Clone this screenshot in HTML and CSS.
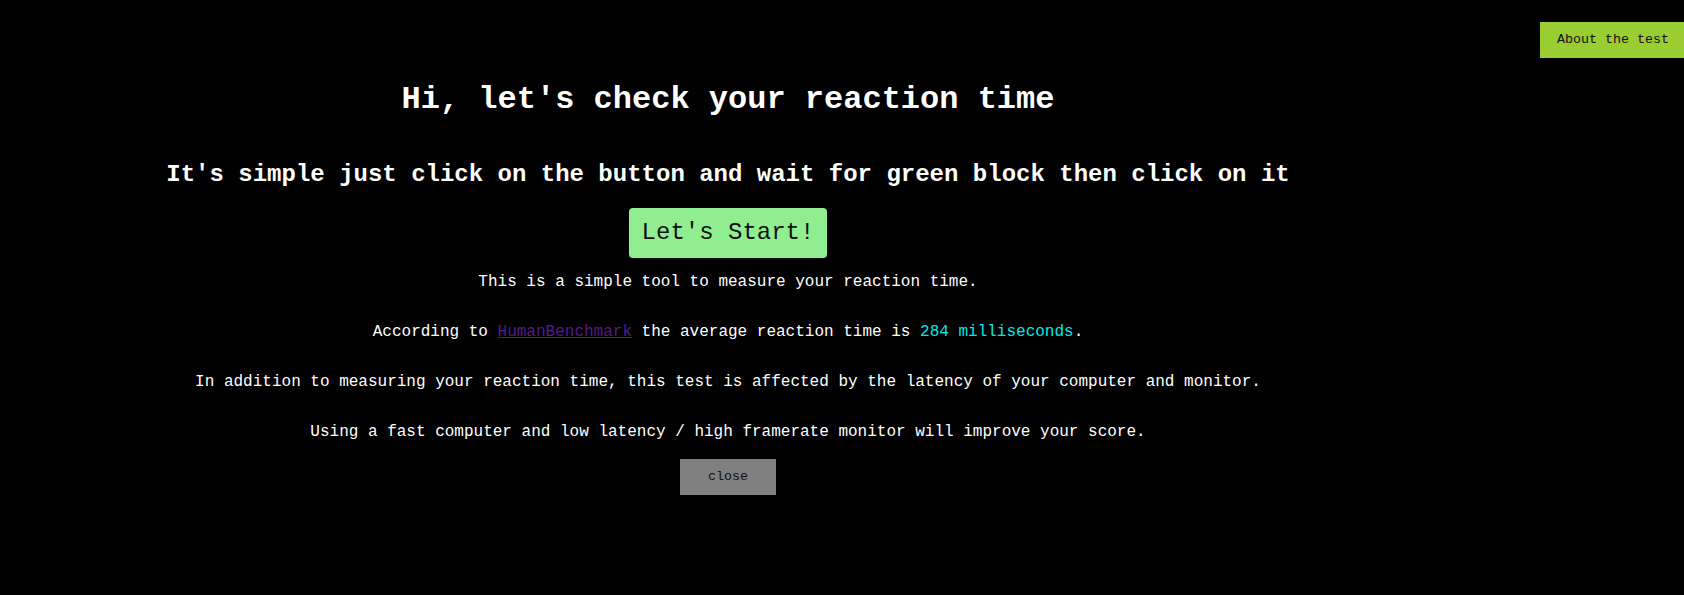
FILE: index.html
```html
<!DOCTYPE html>
<html lang="en">
<head>
<meta charset="utf-8">
<title>Reaction Time Test</title>
<link rel="stylesheet" href="styles.css">
</head>
<body>
<div class="page">
  <main class="main">
    <h1 class="title">Hi, let's check your reaction time</h1>
    <h2 class="subtitle">It's simple just click on the button and wait for green block then click on it</h2>
    <button class="start-btn" type="button">Let's Start!</button>
    <section class="about">
      <p class="about-line">This is a simple tool to measure your reaction time.</p>
      <p class="about-line">According to <a class="link" href="#">HumanBenchmark</a> the average reaction time is <span class="highlight">284 milliseconds</span>.</p>
      <p class="about-line">In addition to measuring your reaction time, this test is affected by the latency of your computer and monitor.</p>
      <p class="about-line">Using a fast computer and low latency / high framerate monitor will improve your score.</p>
    </section>
    <button class="close-btn" type="button">close</button>
  </main>
  <button class="about-btn" type="button">About the test</button>
</div>
</body>
</html>
```

FILE: styles.css
```css
html, body {
  margin: 0;
  padding: 0;
  background: #000;
  color: #fff;
  font-family: "Liberation Mono", "Courier New", monospace;
}

.page {
  position: relative;
  min-height: 595px;
  display: flex;
}

.main {
  width: 1456px;
  padding-top: 81px;
  display: flex;
  flex-direction: column;
  align-items: center;
}

.title {
  margin: 0 0 43px;
  font-size: 32px;
  font-weight: bold;
  line-height: normal;
  color: #fff;
}

.subtitle {
  margin: 0 0 20px;
  font-size: 24px;
  font-weight: bold;
  line-height: normal;
  color: #fff;
}

.start-btn {
  font-family: "Liberation Mono", "Courier New", monospace;
  font-size: 24px;
  line-height: 28px;
  padding: 11px 13px;
  border: none;
  border-radius: 4px;
  background: #90ee90;
  color: #111;
  cursor: pointer;
}

.about {
  margin-top: 15px;
  display: flex;
  flex-direction: column;
  align-items: center;
  gap: 32px;
}

.about-line {
  margin: 0;
  font-size: 16px;
  line-height: 18px;
  color: #fff;
  text-align: center;
}

.link {
  color: #551a8b;
  text-decoration: underline;
}

.highlight {
  color: #00e8e8;
}

.close-btn {
  margin-top: 18px;
  font-family: "Liberation Mono", "Courier New", monospace;
  font-size: 13.333px;
  line-height: 16px;
  padding: 10px 28px;
  border: none;
  background: #808080;
  color: #111;
  cursor: pointer;
}

.about-btn {
  position: absolute;
  top: 22px;
  left: 1540px;
  font-family: "Liberation Mono", "Courier New", monospace;
  font-size: 13.333px;
  line-height: 16px;
  padding: 10px 17px;
  border: none;
  background: #9acd32;
  color: #111;
  white-space: nowrap;
  cursor: pointer;
}
```
